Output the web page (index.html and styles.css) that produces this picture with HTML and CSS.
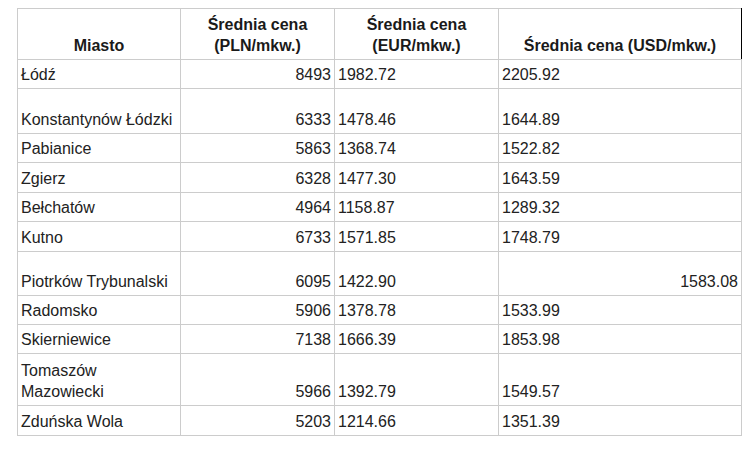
FILE: index.html
```html
<!DOCTYPE html>
<html lang="pl">
<head>
<meta charset="utf-8">
<title>Średnie ceny mieszkań</title>
<link rel="stylesheet" href="styles.css">
</head>
<body>
<div class="fab-shadow"></div>
<table class="prices">
  <colgroup>
    <col class="c1"><col class="c2"><col class="c3"><col class="c4">
  </colgroup>
  <thead>
    <tr class="head">
      <th>Miasto</th>
      <th>Średnia cena<br>(PLN/mkw.)</th>
      <th>Średnia cena<br>(EUR/mkw.)</th>
      <th class="last">Średnia cena (USD/mkw.)</th>
    </tr>
  </thead>
  <tbody>
    <tr><td>Łódź</td><td class="num">8493</td><td>1982.72</td><td>2205.92</td></tr>
    <tr class="tall"><td>Konstantynów Łódzki</td><td class="num">6333</td><td>1478.46</td><td>1644.89</td></tr>
    <tr><td>Pabianice</td><td class="num">5863</td><td>1368.74</td><td>1522.82</td></tr>
    <tr class="r30"><td>Zgierz</td><td class="num">6328</td><td>1477.30</td><td>1643.59</td></tr>
    <tr><td>Bełchatów</td><td class="num">4964</td><td>1158.87</td><td>1289.32</td></tr>
    <tr class="r30"><td>Kutno</td><td class="num">6733</td><td>1571.85</td><td>1748.79</td></tr>
    <tr class="tall2"><td>Piotrków Trybunalski</td><td class="num">6095</td><td>1422.90</td><td class="num">1583.08</td></tr>
    <tr><td>Radomsko</td><td class="num">5906</td><td>1378.78</td><td>1533.99</td></tr>
    <tr><td>Skierniewice</td><td class="num">7138</td><td>1666.39</td><td>1853.98</td></tr>
    <tr class="double"><td>Tomaszów<br>Mazowiecki</td><td class="num">5966</td><td>1392.79</td><td>1549.57</td></tr>
    <tr class="r30"><td>Zduńska Wola</td><td class="num">5203</td><td>1214.66</td><td>1351.39</td></tr>
  </tbody>
</table>
</body>
</html>
```

FILE: styles.css
```css
html, body {
  background: #ffffff;
}

body {
  margin: 8px 0 0 17px;
  font-family: "Liberation Sans", Arial, sans-serif;
  font-size: 16px;
  color: #222222;
  position: relative;
}

.prices {
  border-collapse: collapse;
  table-layout: fixed;
  width: 724px;
}

.c1 { width: 163px; }
.c2 { width: 154px; }
.c3 { width: 164px; }
.c4 { width: 243px; }

.prices th,
.prices td {
  border: 1px solid #cccccc;
  padding: 4px 3px 3px;
  line-height: 21px;
  vertical-align: bottom;
  text-align: left;
}

.prices th {
  font-weight: bold;
  text-align: center;
  color: #1a1a1a;
}

.prices tr.head th {
  height: 43px;
}

.prices th.last {
  border-right-color: #000000;
}

.prices td.num {
  text-align: right;
}

.prices tr.r30 td {
  height: 22px;
}

.prices tr.tall td {
  height: 37px;
}

.prices tr.tall2 td {
  height: 36px;
}

.prices tr.double td {
  height: 44px;
}

.fab-shadow {
  position: absolute;
  top: -30px;
  right: 12px;
  width: 34px;
  height: 26px;
  border-radius: 8px;
  background: #ffffff;
  box-shadow: 0 1px 5px rgba(0, 0, 0, 0.2);
}
```
